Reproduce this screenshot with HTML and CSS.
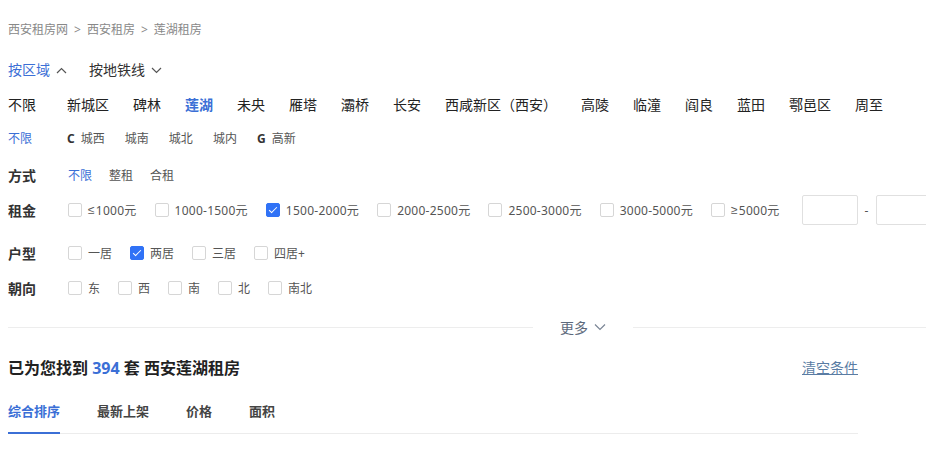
FILE: index.html
```html
<!DOCTYPE html>
<html lang="zh-CN">
<head>
    <meta charset="UTF-8">
    <title>西安莲湖租房</title>
    <link rel="stylesheet" href="styles.css">
</head>
<body>
    <div class="page">
        <div class="crumbs">
            <a>西安租房网</a><span class="sep">&gt;</span><a>西安租房</a><span class="sep">&gt;</span><a>莲湖租房</a>
        </div>

        <div class="area-tabs">
            <span class="area-tab active">按区域
                <svg class="chev" viewBox="0 0 11 7"><path d="M1 6L5.5 1.5L10 6"/></svg>
            </span>
            <span class="area-tab">按地铁线
                <svg class="chev" viewBox="0 0 11 7"><path d="M1 1L5.5 5.5L10 1"/></svg>
            </span>
        </div>

        <div class="districts">
            <span class="all">不限</span>
            <span>新城区</span>
            <span>碑林</span>
            <span class="active">莲湖</span>
            <span>未央</span>
            <span>雁塔</span>
            <span>灞桥</span>
            <span>长安</span>
            <span>西咸新区（西安）</span>
            <span>高陵</span>
            <span>临潼</span>
            <span>阎良</span>
            <span>蓝田</span>
            <span>鄠邑区</span>
            <span>周至</span>
        </div>

        <div class="subareas">
            <span class="all active">不限</span>
            <span><b>C</b> 城西</span>
            <span>城南</span>
            <span>城北</span>
            <span>城内</span>
            <span><b>G</b> 高新</span>
        </div>

        <div class="row">
            <div class="label">方式</div>
            <div class="opts plain">
                <span class="active">不限</span>
                <span>整租</span>
                <span>合租</span>
            </div>
        </div>

        <div class="row price">
            <div class="label">租金</div>
            <div class="opts">
                <label class="check"><i class="box"></i><span class="sym">≤</span>1000元</label>
                <label class="check"><i class="box"></i>1000-1500元</label>
                <label class="check on"><i class="box"></i>1500-2000元</label>
                <label class="check"><i class="box"></i>2000-2500元</label>
                <label class="check"><i class="box"></i>2500-3000元</label>
                <label class="check"><i class="box"></i>3000-5000元</label>
                <label class="check"><i class="box"></i><span class="sym">≥</span>5000元</label>
                <div class="range">
                    <input type="text">
                    <span class="dash">-</span>
                    <input type="text">
                </div>
            </div>
        </div>

        <div class="row layout">
            <div class="label">户型</div>
            <div class="opts">
                <label class="check"><i class="box"></i>一居</label>
                <label class="check on"><i class="box"></i>两居</label>
                <label class="check"><i class="box"></i>三居</label>
                <label class="check"><i class="box"></i>四居+</label>
            </div>
        </div>

        <div class="row facing">
            <div class="label">朝向</div>
            <div class="opts">
                <label class="check"><i class="box"></i>东</label>
                <label class="check"><i class="box"></i>西</label>
                <label class="check"><i class="box"></i>南</label>
                <label class="check"><i class="box"></i>北</label>
                <label class="check"><i class="box"></i>南北</label>
            </div>
        </div>

        <div class="more">
            <span class="line left"></span>
            <span class="more-btn">更多
                <svg class="chev" viewBox="0 0 12 7"><path d="M1 0.5L6 5.5L11 0.5"/></svg>
            </span>
            <span class="line right"></span>
        </div>

        <div class="result">
            <h2>已为您找到 <em>394</em> 套 西安莲湖租房</h2>
            <a class="clear">清空条件</a>
        </div>

        <div class="sort">
            <span class="active">综合排序</span>
            <span>最新上架</span>
            <span>价格</span>
            <span>面积</span>
        </div>
    </div>
</body>
</html>
```

FILE: styles.css
```css
body {
    margin: 0;
    background: #fff;
    color: #222;
    font-family: "Noto Sans", "Noto Sans CJK SC", sans-serif;
    overflow: hidden;
}

.page {
    padding-left: 8px;
    width: 1100px;
}

.crumbs {
    padding-top: 20px;
    height: 20px;
    line-height: 20px;
    font-size: 12px;
    color: #888;
}

.crumbs .sep {
    margin: 0 6px;
}

.area-tabs {
    margin-top: 20px;
    display: flex;
    height: 20px;
    line-height: 20px;
    font-size: 14px;
    color: #333;
}

.area-tab {
    display: flex;
    align-items: center;
    margin-right: 22px;
}

.area-tab.active {
    color: #3b6fd6;
}

.chev {
    width: 11px;
    height: 7px;
    margin-left: 6px;
    fill: none;
    stroke: #555;
    stroke-width: 1.2;
}

.districts {
    margin-top: 15px;
    display: flex;
    height: 20px;
    line-height: 20px;
    font-size: 14px;
    white-space: nowrap;
}

.districts span {
    margin-right: 24px;
}

.districts .all,
.subareas .all {
    width: 59px;
    margin-right: 0;
}

.districts .active {
    color: #3b6fd6;
    font-weight: bold;
}

.subareas {
    margin-top: 14px;
    display: flex;
    height: 20px;
    line-height: 20px;
    font-size: 12px;
    color: #555;
}

.subareas span {
    margin-right: 20px;
}

.subareas b {
    color: #333;
    margin-right: 3px;
}

.subareas .active {
    color: #3b6fd6;
}

.row {
    display: flex;
    align-items: center;
    height: 20px;
    margin-top: 16px;
}

.label {
    width: 60px;
    font-size: 14px;
    font-weight: bold;
    color: #333;
}

.opts {
    display: flex;
    align-items: center;
    font-size: 12px;
    color: #555;
    white-space: nowrap;
}

.opts.plain span {
    margin-right: 17px;
}

.opts .active {
    color: #3b6fd6;
}

.price {
    height: 30px;
    margin-top: 10px;
}

.price .check {
    letter-spacing: 0.25px;
}

.sym {
    font-family: "Liberation Sans", sans-serif;
    margin-right: 1px;
}

.layout {
    margin-top: 18px;
}

.facing {
    margin-top: 15px;
}

.check {
    display: flex;
    align-items: center;
    margin-right: 18px;
}

.box {
    width: 12px;
    height: 12px;
    border: 1px solid #d6d6d6;
    border-radius: 2px;
    margin-right: 6px;
    box-sizing: content-box;
    position: relative;
}

.check.on .box {
    background: #3072f6;
    border-color: #3072f6;
}

.check.on .box::after {
    content: "";
    position: absolute;
    left: 4px;
    top: 1px;
    width: 3px;
    height: 7px;
    border: solid #fff;
    border-width: 0 1.5px 1.5px 0;
    transform: rotate(45deg);
}

.range {
    display: flex;
    align-items: center;
    margin-left: 4px;
}

.range input {
    width: 56px;
    height: 30px;
    box-sizing: border-box;
    border: 1px solid #e0e0e0;
    border-radius: 2px;
    outline: none;
}

.dash {
    margin: 0 8px 0 7px;
    color: #555;
}

.more {
    margin-top: 19px;
    margin-left: -8px;
    display: flex;
    align-items: center;
    height: 20px;
    width: 926px;
}

.more .line {
    height: 1px;
    background: #ededed;
}

.more .left {
    margin-left: 8px;
    width: 525px;
}

.more .right {
    flex: 1;
}

.more-btn {
    display: flex;
    align-items: center;
    width: 100px;
    justify-content: center;
    font-size: 14px;
    color: #5d6a7c;
}

.more-btn .chev {
    width: 12px;
    height: 7px;
    stroke: #7a8595;
}

.result {
    margin-top: 18px;
    width: 850px;
    display: flex;
    justify-content: space-between;
    align-items: center;
    height: 24px;
}

.result h2 {
    margin: 0;
    font-size: 16px;
    font-weight: bold;
    color: #222;
}

.result em {
    font-style: normal;
    color: #3b6fd6;
}

.clear {
    font-size: 14px;
    color: #5a7ca3;
    text-decoration: underline;
}

.sort {
    margin-top: 22px;
    width: 850px;
    display: flex;
    border-bottom: 1px solid #ececec;
    font-size: 13px;
    font-weight: bold;
    color: #444;
}

.sort span {
    line-height: 20px;
    padding-bottom: 11px;
    margin-right: 37px;
}

.sort .active {
    color: #3b6fd6;
    border-bottom: 2px solid #3b6fd6;
    margin-bottom: -1px;
}
```
